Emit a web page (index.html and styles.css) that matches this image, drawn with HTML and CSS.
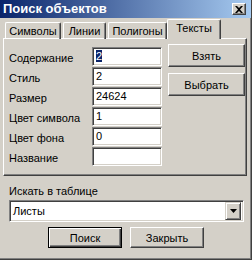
FILE: index.html
```html
<!DOCTYPE html>
<html>
<head>
<meta charset="utf-8">
<link rel="stylesheet" href="styles.css">
</head>
<body>
<div class="window">
  <div class="titlebar">
    <span class="title">Поиск объектов</span>
    <span class="close"><svg width="8" height="7" viewBox="0 0 8 7"><path d="M0 0h2l2 2 2-2h2L5 3.5 8 7H6L4 5 2 7H0l3-3.5z" fill="#000"/></svg></span>
  </div>
  <div class="tabs">
    <div class="tab t1">Символы</div>
    <div class="tab t2">Линии</div>
    <div class="tab t3">Полигоны</div>
    <div class="tab active">Тексты</div>
  </div>
  <div class="panel">
    <div class="fields">
      <label>Содержание</label><div class="field"><span class="sel">2</span></div>
      <label>Стиль</label><div class="field">2</div>
      <label>Размер</label><div class="field">24624</div>
      <label>Цвет символа</label><div class="field">1</div>
      <label>Цвет фона</label><div class="field">0</div>
      <label>Название</label><div class="field"></div>
    </div>
    <div class="side">
      <div class="btn">Взять</div>
      <div class="btn">Выбрать</div>
    </div>
  </div>
  <div class="search-label">Искать в таблице</div>
  <div class="combo">
    <span class="combo-text">Листы</span>
    <span class="drop"><svg width="7" height="4" viewBox="0 0 7 4"><path d="M0 0h7L3.5 4z" fill="#000"/></svg></span>
  </div>
  <div class="actions">
    <div class="btn default">Поиск</div>
    <div class="btn">Закрыть</div>
  </div>
</div>
</body>
</html>
```
FILE: styles.css
```css
html, body {
  margin: 0;
  padding: 0;
  background: #d4d0c8;
}
.window {
  width: 251px;
  height: 259px;
  background: #d4d0c8;
  border-right: 1px solid #404040;
  border-bottom: 1px solid #404040;
  box-shadow: inset -1px -1px #808080;
  font-family: "Liberation Sans", Arial, sans-serif;
  font-size: 11px;
  color: #000;
  box-sizing: content-box;
}
.titlebar {
  height: 18px;
  background: linear-gradient(to right, #0a246a, #a6caf0);
  display: flex;
  align-items: center;
  justify-content: space-between;
  padding: 0 3px 0 3px;
}
.title {
  color: #fff;
  font-weight: bold;
  font-size: 13px;
  margin-top: -1px;
}
.close {
  width: 12px;
  height: 10px;
  background: #d4d0c8;
  border: 1px solid;
  border-color: #fff #404040 #404040 #fff;
  box-shadow: inset -1px -1px #808080;
  display: flex;
  align-items: center;
  justify-content: center;
  margin-right: 2px;
}
.tabs {
  display: flex;
  align-items: flex-end;
  height: 20px;
  padding-left: 5px;
  margin-top: 1px;
}
.tab {
  border: 1px solid #fff;
  border-bottom: none;
  border-right: 1px solid #404040;
  box-shadow: inset -1px 0 #808080;
  border-radius: 2px 2px 0 0;
  padding: 0;
  margin-right: 2px;
  text-align: center;
  box-sizing: border-box;
  height: 17px;
  line-height: 16px;
  white-space: nowrap;
}
.t1 { width: 56px; }
.t2 { width: 43px; }
.t3 { width: 59px; }
.tab.active {
  height: 20px;
  width: 54px;
  margin-left: -2px;
  margin-right: 0;
  position: relative;
  z-index: 1;
  background: #d4d0c8;
  line-height: 17px;
}
.panel {
  margin: -1px 4px 0 3px;
  height: 138px;
  box-sizing: border-box;
  border: 1px solid;
  border-color: #fff #404040 #404040 #fff;
  box-shadow: inset -1px -1px #808080;
  display: flex;
  padding: 8px 0 0 5px;
}
.fields {
  display: grid;
  grid-template-columns: 83px 70px;
  row-gap: 1px;
  align-content: start;
}
.fields label {
  height: 19px;
  line-height: 19px;
  padding-top: 2px;
  box-sizing: border-box;
}
.field {
  height: 19px;
  box-sizing: border-box;
  background: #fff;
  border: 1px solid;
  border-color: #808080 #fff #fff #808080;
  box-shadow: inset 1px 1px #404040, inset -1px -1px #d4d0c8;
  padding: 2px 0 0 3px;
  line-height: 13px;
  white-space: nowrap;
  overflow: hidden;
}
.sel {
  background: #0a246a;
  color: #fff;
}
.side {
  display: flex;
  flex-direction: column;
  gap: 6px;
  margin-left: 6px;
  margin-top: -3px;
}
.btn {
  width: 77px;
  height: 23px;
  box-sizing: border-box;
  border: 1px solid;
  border-color: #fff #404040 #404040 #fff;
  box-shadow: inset -1px -1px #808080;
  display: flex;
  align-items: center;
  justify-content: center;
  background: #d4d0c8;
}
.search-label {
  margin: 9px 0 0 9px;
  height: 13px;
  line-height: 13px;
}
.combo {
  margin: 2px 0 0 9px;
  width: 235px;
  height: 22px;
  box-sizing: border-box;
  background: #fff;
  border: 1px solid;
  border-color: #808080 #fff #fff #808080;
  box-shadow: inset 1px 1px #404040, inset -1px -1px #d4d0c8;
  display: flex;
  align-items: center;
  justify-content: space-between;
  padding: 2px 2px 2px 3px;
}
.drop {
  width: 16px;
  height: 18px;
  box-sizing: border-box;
  background: #d4d0c8;
  border: 1px solid;
  border-color: #d4d0c8 #404040 #404040 #d4d0c8;
  box-shadow: inset 1px 1px #fff, inset -1px -1px #808080;
  display: flex;
  align-items: center;
  justify-content: center;
}
.actions {
  display: flex;
  gap: 8px;
  margin: 5px 0 0 48px;
}
.actions .btn {
  width: 74px;
  height: 21px;
}
.btn.default {
  border: 1px solid #000;
  box-shadow: inset 1px 1px #fff, inset -1px -1px #404040, inset -2px -2px #808080;
}
```
